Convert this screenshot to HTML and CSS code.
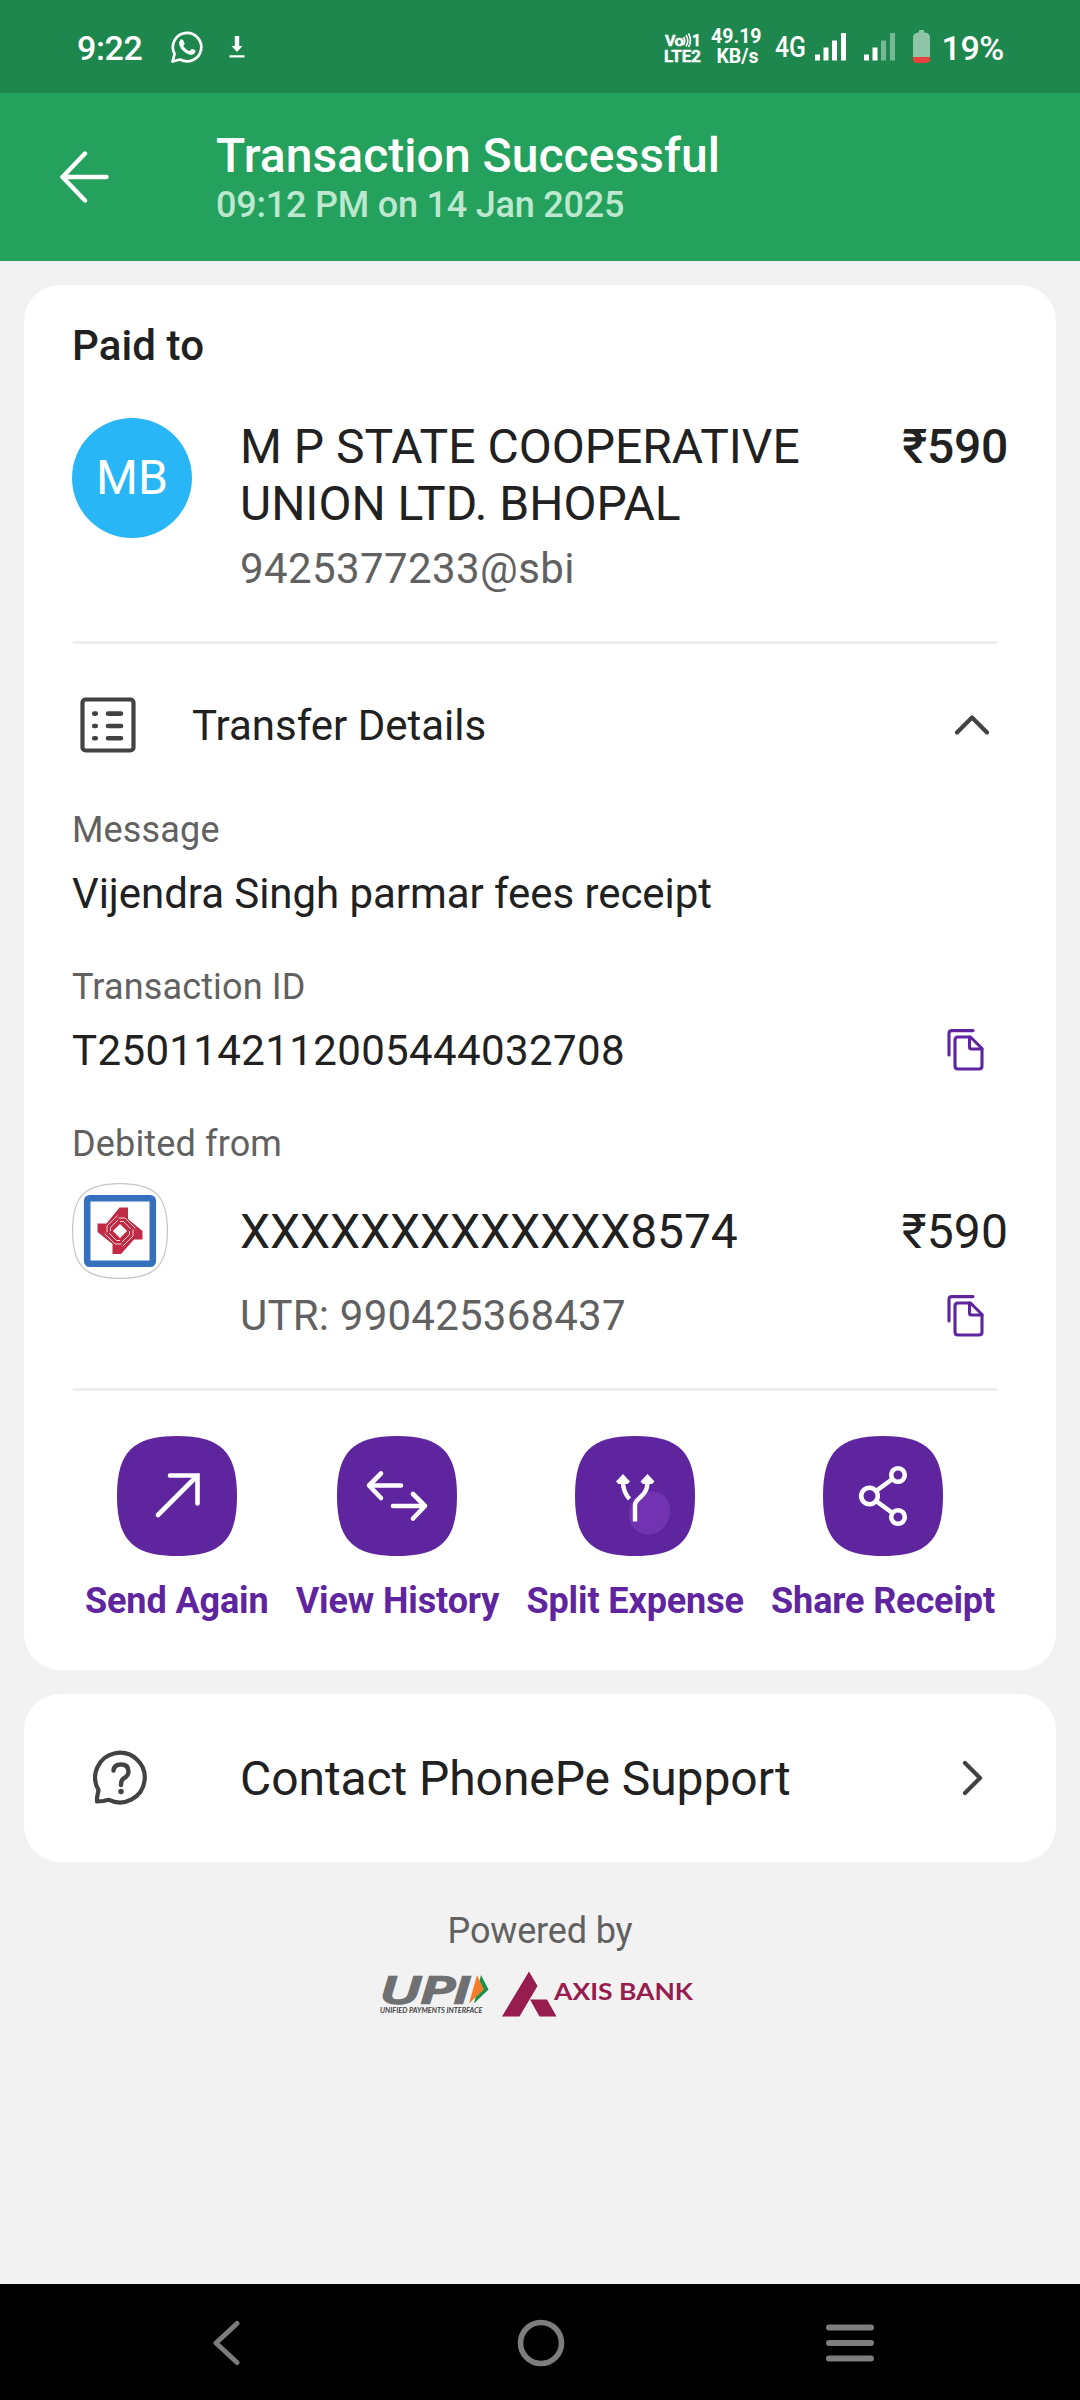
FILE: index.html
```html
<!DOCTYPE html>
<html lang="en">
<head>
<meta charset="utf-8">
<title>Transaction Successful</title>
<link rel="stylesheet" href="styles.css">
</head>
<body>
<svg class="defs" width="0" height="0" aria-hidden="true">
  <symbol id="copy" viewBox="0 0 37 42">
    <g fill="none" stroke="#5f259f" stroke-width="3.1" stroke-linejoin="round" stroke-linecap="round">
      <path d="M2 26V4.500Q2 1.600 5 1.600H26"/>
      <path d="M11 8H23.500L35 19.500V37Q35 40 32 40H11Q8 40 8 37V11Q8 8 11 8Z"/>
      <path d="M22.500 8V18Q22.500 20 24.500 20H35"/>
    </g>
  </symbol>
  <symbol id="tile" viewBox="0 0 120 120">
    <path d="M60 0C104 0 120 16 120 60S104 120 60 120S0 104 0 60S16 0 60 0Z" fill="#5f259f"/>
  </symbol>
</svg>
<div class="screen">
  <div class="status">
    <div class="status-left">
      <span class="clock">9:22</span>
      <svg class="whatsapp" width="32" height="32" viewBox="0 0 32 32">
        <path d="M1.500 30.500L3.600 23A14.200 14.200 0 1 1 9 28.500Z" fill="none" stroke="#fff" stroke-width="2.700" stroke-linejoin="round"/>
        <path d="M9.600 8.500Q11 7.600 12.200 9.200L13.600 12.400Q13.700 13.500 12.300 15Q14.500 18.600 18.300 20.200L20.300 18.200Q21 17.700 22 18.200L24.200 19.300Q25 20 24.200 21.600Q22 25 17.600 23.200Q10.400 20.300 8.300 13.700Q7.700 10.500 9.600 8.500Z" fill="#fff"/>
      </svg>
      <svg class="download" width="16" height="22" viewBox="0 0 16 22">
        <path d="M5.800 0H10.200V10H13.500L8 16L2.500 10H5.800ZM.5 19.300H15.500V21.500H.5Z" fill="#fff"/>
      </svg>
    </div>
    <div class="status-right">
      <svg class="volte" width="38" height="40" viewBox="0 -5 38 40">
        <g fill="#fff" stroke="#fff" stroke-width=".4" font-family="Roboto, sans-serif" font-weight="700">
          <text x="1" y="14" font-size="15" textLength="10.500" lengthAdjust="spacingAndGlyphs">V</text>
          <text x="10.500" y="14" font-size="15.500" textLength="9.500" lengthAdjust="spacingAndGlyphs">o</text>
          <text x="28" y="13.500" font-size="17" textLength="9" lengthAdjust="spacingAndGlyphs">1</text>
          <text x="0" y="30" font-size="17" textLength="37" lengthAdjust="spacingAndGlyphs">LTE2</text>
        </g>
        <path d="M19.500 5Q22 9 19.500 13M22 3Q25.500 8.500 22 14.500M24.500 1.500Q28.500 8.500 24.500 15" fill="none" stroke="#fff" stroke-width="1.600"/>
      </svg>
      <div class="speed"><span>49.19</span><span>KB/s</span></div>
      <svg class="radio" width="194" height="34" viewBox="0 0 194 34">
        <text x="0" y="27" font-size="29" font-family="Roboto, sans-serif" fill="#fff" textLength="31" lengthAdjust="spacingAndGlyphs">4G</text>
        <g fill="#fff">
          <path d="M40 24.500h5v6h-5zM48.500 17.500h5v13h-5zM57 10.500h5v20h-5zM66 3h5v27.500h-5z"/>
          <path d="M89 24.500h5v6h-5zM97.500 17.500h5v13h-5z"/>
          <path d="M106 10.500h5v20h-5zM115 3h5v27.500h-5z" opacity=".4"/>
        </g>
        <path d="M144 0h5v2.500h1.500q4.500 1 4.500 5V27h-17V7.500q0-4 4.500-5H144z" fill="#8ec5a7"/>
        <path d="M138 27h17v2q0 4-4 4h-9q-4 0-4-4z" fill="#e9423f"/>
      </svg>
      <span class="battery-text">19%</span>
    </div>
  </div>

  <header class="header">
    <svg class="back" width="50" height="52" viewBox="0 0 50 52">
      <path d="M25 2.500L2.500 26L25 49.500M3 26H46.500" fill="none" stroke="#fff" stroke-width="4.400" stroke-linecap="round" stroke-linejoin="round"/>
    </svg>
    <div class="header-text">
      <div class="title">Transaction Successful</div>
      <div class="subtitle">09:12 PM on 14 Jan 2025</div>
    </div>
  </header>

  <main class="content">
    <section class="card receipt">
      <div class="paid-to">Paid to</div>
      <div class="payee">
        <div class="avatar">MB</div>
        <div class="payee-info">
          <div class="payee-name">M P STATE COOPERATIVE<br>UNION LTD. BHOPAL</div>
          <div class="vpa">9425377233@sbi</div>
        </div>
        <div class="amount strong">₹590</div>
      </div>
      <hr class="divider">
      <div class="transfer">
        <svg width="56" height="56" viewBox="0 0 56 56">
          <rect x="2.500" y="2.500" width="51" height="51" rx="3" fill="none" stroke="#424242" stroke-width="4.200"/>
          <g stroke="#424242" stroke-width="4.600" stroke-linecap="round">
            <path d="M14.200 16.600h1.600M28 16.600h13M14.200 29h1.600M28 29h13M14.200 41.200h1.600M28 41.200h13"/>
          </g>
        </svg>
        <span class="transfer-title">Transfer Details</span>
        <svg width="36" height="22" viewBox="0 0 36 22">
          <path d="M3 18.500L18 3.500L33 18.500" fill="none" stroke="#424242" stroke-width="4.200" stroke-linecap="round" stroke-linejoin="round"/>
        </svg>
      </div>
      <div class="field">
        <div class="label">Message</div>
        <div class="value message">Vijendra Singh parmar fees receipt</div>
      </div>
      <div class="field">
        <div class="label">Transaction ID</div>
        <div class="value-row">
          <div class="value txn">T2501142112005444032708</div>
          <svg class="copy" width="37" height="42"><use href="#copy"/></svg>
        </div>
      </div>
      <div class="field">
        <div class="label">Debited from</div>
        <div class="bank">
          <svg width="96" height="96" viewBox="0 0 96 96">
            <path d="M48 .6C83 .6 95.400 13 95.400 48S83 95.400 48 95.400S.6 83 .6 48S13 .6 48 .6Z" fill="#fff" stroke="#c4c4c4" stroke-width="1.200"/>
            <rect x="15.200" y="15.200" width="65.600" height="65.600" rx="2.500" fill="none" stroke="#3570bd" stroke-width="6.600"/>
            <path d="M47.500 24.500H56V36L70.500 48V56.500H62L49 71H40.500V61L25.500 49V40.500H34.500Z" fill="#c02a45"/>
            <g id="arm"><path d="M35 49.500V43L45.500 32.500M38.500 48V44.500L46 37" fill="none" stroke="#f3d3d9" stroke-width="1"/></g>
            <use href="#arm" transform="rotate(90 48 48)"/>
            <use href="#arm" transform="rotate(180 48 48)"/>
            <use href="#arm" transform="rotate(270 48 48)"/>
            <path d="M48 41L55 48L48 55L41 48Z" fill="#fff"/>
          </svg>
          <span class="account">XXXXXXXXXXXXX8574</span>
          <span class="amount">₹590</span>
        </div>
        <div class="value-row utr-row">
          <div class="utr">UTR: 990425368437</div>
          <svg class="copy" width="37" height="42"><use href="#copy"/></svg>
        </div>
      </div>
      <hr class="divider">
      <div class="actions">
        <div class="action">
          <svg width="120" height="120" viewBox="0 0 120 120">
            <use href="#tile"/>
            <path d="M41 79L80 40M53 39.500H80.500V67.500" fill="none" stroke="#fff" stroke-width="4.600" stroke-linecap="round"/>
          </svg>
          <span>Send Again</span>
        </div>
        <div class="action">
          <svg width="120" height="120" viewBox="0 0 120 120">
            <use href="#tile"/>
            <path d="M44 37.500L32 49.500L44 62M33 49.500H64M76 58L88 70L76 82.500M87 70H56" fill="none" stroke="#fff" stroke-width="4.600" stroke-linecap="round" stroke-linejoin="round"/>
          </svg>
          <span>View History</span>
        </div>
        <div class="action">
          <svg width="120" height="120" viewBox="0 0 120 120">
            <use href="#tile"/>
            <path d="M75 55.500C88 55.500 95 63 95 74C95 88 86 98.500 73 98.500C61 98.500 54 89 54 78C54 64 62 55.500 75 55.500Z" fill="#7133b1"/>
            <path d="M60 85.500V69C60 62 72.500 61 72.500 46V43M48 43V46Q48 56 54.500 63" fill="none" stroke="#fff" stroke-width="4.400"/>
            <path d="M48 38L55 45.500L52.500 48H43.500L41 45.500ZM72.500 38L79.500 45.500L77 48H68L65.500 45.500Z" fill="#fff"/>
          </svg>
          <span>Split Expense</span>
        </div>
        <div class="action">
          <svg width="120" height="120" viewBox="0 0 120 120">
            <use href="#tile"/>
            <g fill="none" stroke="#fff" stroke-width="4.600">
              <circle cx="46.500" cy="60" r="8.300"/>
              <circle cx="75" cy="39" r="6.800"/>
              <circle cx="75" cy="81" r="6.800"/>
              <path d="M53 55L69.500 43M53 65L69.500 77"/>
            </g>
          </svg>
          <span>Share Receipt</span>
        </div>
      </div>
    </section>

    <section class="card support">
      <svg width="56" height="56" viewBox="0 0 56 56">
        <path d="M4 51.500V48L5.500 40A24.800 24.800 0 1 1 16 49.800L10 51Z" fill="none" stroke="#424242" stroke-width="4.200" stroke-linejoin="round"/>
        <path d="M20.500 20.500Q21 14.500 28 14.500Q35.500 14.500 35.500 21.500Q35.500 26 30.500 28.500Q28 30 28 35" fill="none" stroke="#424242" stroke-width="4.400" stroke-linecap="round"/>
        <circle cx="28" cy="41.500" r="2.700" fill="#424242"/>
      </svg>
      <span class="support-text">Contact PhonePe Support</span>
      <svg width="22" height="36" viewBox="0 0 22 36">
        <path d="M3 3L18 18L3 33" fill="none" stroke="#424242" stroke-width="4.200" stroke-linecap="round" stroke-linejoin="round"/>
      </svg>
    </section>

    <footer class="powered">
      <div class="powered-label">Powered by</div>
      <svg width="316" height="48" viewBox="0 0 316 48">
        <text x="1.500" y="32.500" font-family="'DejaVu Sans', sans-serif" font-style="italic" font-size="35.500" fill="#6f7072" stroke="#6f7072" stroke-width="2.600" textLength="89" lengthAdjust="spacingAndGlyphs">UPI</text>
        <path d="M101 5L108.500 19.500L94 33.500Z" fill="#15924c"/>
        <path d="M97 5L104 19.500L89 33.500Z" fill="#f47d2c"/>
        <text x="0" y="42.500" font-family="Lato, sans-serif" font-style="italic" font-weight="700" font-size="7.800" fill="#444" textLength="102.500" lengthAdjust="spacingAndGlyphs">UNIFIED PAYMENTS INTERFACE</text>
        <path d="M122 46.500L149 1.500L157.500 16L139.500 46.500ZM150 29.500H167L176.500 46.500H159.500Z" fill="#971d4f"/>
        <text x="174" y="30" font-family="Lato, sans-serif" font-weight="700" font-size="23" fill="#971d4f" textLength="139" lengthAdjust="spacingAndGlyphs">AXIS BANK</text>
      </svg>
    </footer>
  </main>

  <nav class="navbar">
    <svg width="30" height="46" viewBox="0 0 30 46">
      <path d="M26 3.500L5 23L26 42.500" fill="none" stroke="#7d7d7d" stroke-width="5" stroke-linecap="round" stroke-linejoin="round"/>
    </svg>
    <svg class="home" width="48" height="48" viewBox="0 0 48 48">
      <circle cx="24" cy="24" r="20.500" fill="none" stroke="#7d7d7d" stroke-width="5.600"/>
    </svg>
    <svg class="recents" width="48" height="38" viewBox="0 0 48 38">
      <path d="M3 3.500H45M3 19H45M3 34.500H45" stroke="#7d7d7d" stroke-width="6" stroke-linecap="round"/>
    </svg>
  </nav>
</div>
</body>
</html>
```
FILE: styles.css
```css
body {
  margin: 0;
  font-family: Roboto, sans-serif;
  color: #212121;
  background: #f2f2f2;
}

svg { display: block; flex: none; }
.defs { position: absolute; }

.screen {
  width: 1080px;
  height: 2400px;
  display: flex;
  flex-direction: column;
  overflow: hidden;
}

/* Status bar */
.status {
  box-sizing: border-box;
  height: 93px;
  padding: 0 76px 0 77px;
  display: flex;
  justify-content: space-between;
  background: #1d874d;
  color: #fff;
  font-weight: 500;
}
.status-left, .status-right { display: flex; align-items: flex-start; }
.clock, .battery-text {
  margin-top: 28px;
  font-size: 34px;
  line-height: 40px;
  letter-spacing: -0.4px;
}
.whatsapp { margin: 31px 0 0 29px; }
.download { margin: 36px 0 0 26px; }
.volte { margin-top: 27px; }
.speed {
  width: 54px;
  margin: 27px 0 0 6px;
  display: flex;
  flex-direction: column;
  align-items: flex-end;
  font-size: 19.5px;
  font-weight: 700;
  line-height: 20px;
}
.speed span:last-child { padding-right: 3px; }
.radio { margin: 30px -27px 0 13px; }

/* App header */
.header {
  box-sizing: border-box;
  height: 168px;
  padding: 35px 60px 0;
  display: flex;
  background: #23a15d;
}
.back { margin-top: 23px; }
.header-text { margin-left: 106px; }
.title {
  font-size: 48px;
  font-weight: 500;
  line-height: 56px;
  letter-spacing: 0.05px;
  color: #fff;
}
.subtitle {
  font-size: 36px;
  font-weight: 500;
  line-height: 42px;
  letter-spacing: -0.22px;
  color: #bde7cf;
}

/* Cards */
.content {
  flex: 1;
  padding: 24px 24px 0;
}
.card {
  box-sizing: border-box;
  border-radius: 36px;
  background: #fff;
}
.receipt {
  height: 1385px;
  padding: 36px 48px 0;
}
.paid-to {
  font-size: 42px;
  font-weight: 500;
  line-height: 49px;
  letter-spacing: 0.1px;
}
.payee { display: flex; margin-top: 48px; }
.avatar {
  width: 120px;
  height: 120px;
  border-radius: 50%;
  background: #29b6f6;
  color: #fff;
  font-size: 48px;
  line-height: 120px;
  text-align: center;
}
.payee-info { flex: 1; margin-left: 48px; }
.payee-name {
  font-size: 48px;
  line-height: 57px;
}
.vpa {
  margin-top: 12px;
  font-size: 42px;
  line-height: 49px;
  letter-spacing: 0.4px;
  color: #616161;
}
.amount { font-size: 48px; line-height: 57px; letter-spacing: 0.1px; }
.strong { font-weight: 500; letter-spacing: -0.3px; }
.divider {
  height: 3px;
  margin: 48px 11px 0 1px;
  border: 0;
  background: #eee;
}

.transfer {
  height: 72px;
  margin-top: 45px;
  padding: 0 18px 0 8px;
  display: flex;
  align-items: center;
}
.transfer-title {
  flex: 1;
  margin-left: 56px;
  font-size: 42px;
  line-height: 49px;
}
.field { margin-top: 48px; }
.label {
  font-size: 36px;
  line-height: 42px;
  letter-spacing: 0.15px;
  color: #616161;
}
.value {
  margin-top: 18px;
  font-size: 42px;
  line-height: 49px;
}
.message { letter-spacing: -0.06px; }
.txn { letter-spacing: 0.37px; }
.value-row { display: flex; justify-content: space-between; }
.value-row .copy { margin: 21px 24px 0 0; }
.utr-row .copy { margin-top: 4px; }
.bank {
  margin-top: 18px;
  display: flex;
  align-items: center;
}
.account {
  flex: 1;
  margin-left: 72px;
  font-size: 48px;
  line-height: 57px;
  letter-spacing: -0.08px;
}
.utr-row { margin-top: 12px; }
.utr {
  margin-left: 168px;
  font-size: 42px;
  line-height: 49px;
  letter-spacing: 0.22px;
  color: #616161;
}

/* Actions */
.actions {
  margin-top: 45px;
  padding: 0 13px;
  display: flex;
  justify-content: space-between;
}
.action {
  display: flex;
  flex-direction: column;
  align-items: center;
}
.action span {
  margin-top: 24px;
  font-size: 36px;
  font-weight: 700;
  line-height: 42px;
  letter-spacing: -0.12px;
  color: #5f259f;
}

/* Support */
.support {
  height: 168px;
  margin-top: 24px;
  padding: 0 72px 0 69px;
  display: flex;
  align-items: center;
}
.support-text {
  flex: 1;
  margin: 1px 0 0 91px;
  font-size: 48px;
  line-height: 56px;
  letter-spacing: -0.08px;
}

.powered {
  margin-top: 48px;
  display: flex;
  flex-direction: column;
  align-items: center;
}
.powered-label {
  font-size: 36px;
  line-height: 42px;
  letter-spacing: -0.15px;
  color: #616161;
}
.powered svg { margin: 18px 4px 0 0; }

/* System navigation */
.navbar {
  box-sizing: border-box;
  height: 116px;
  padding: 2px 206px 0 211px;
  display: flex;
  align-items: center;
  background: #000;
}
.home { margin-left: 276px; }
.recents { margin-left: auto; }
```
